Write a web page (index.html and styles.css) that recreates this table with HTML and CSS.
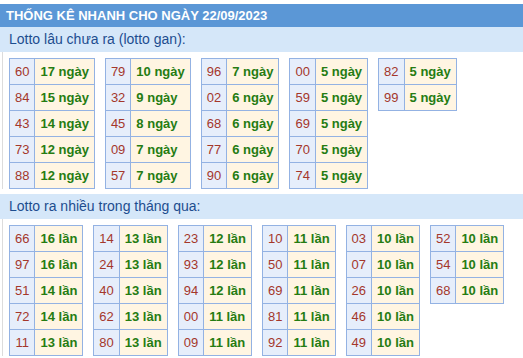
FILE: index.html
```html
<!DOCTYPE html>
<html lang="vi">
<head>
<meta charset="utf-8">
<title>Thống kê nhanh</title>
<link rel="stylesheet" href="styles.css">
</head>
<body>
<div class="page">
  <div class="title">THỐNG KÊ NHANH CHO NGÀY 22/09/2023</div>
  <div class="band">Lotto lâu chưa ra (lotto gan):</div>
  <div class="box">
    <table class="lt"><tr><td class="n">60</td><td class="v">17 ngày</td></tr><tr><td class="n">84</td><td class="v">15 ngày</td></tr><tr><td class="n">43</td><td class="v">14 ngày</td></tr><tr><td class="n">73</td><td class="v">12 ngày</td></tr><tr><td class="n">88</td><td class="v">12 ngày</td></tr></table>
    <table class="lt"><tr><td class="n">79</td><td class="v">10 ngày</td></tr><tr><td class="n">32</td><td class="v">9 ngày</td></tr><tr><td class="n">45</td><td class="v">8 ngày</td></tr><tr><td class="n">09</td><td class="v">7 ngày</td></tr><tr><td class="n">57</td><td class="v">7 ngày</td></tr></table>
    <table class="lt"><tr><td class="n">96</td><td class="v">7 ngày</td></tr><tr><td class="n">02</td><td class="v">6 ngày</td></tr><tr><td class="n">68</td><td class="v">6 ngày</td></tr><tr><td class="n">77</td><td class="v">6 ngày</td></tr><tr><td class="n">90</td><td class="v">6 ngày</td></tr></table>
    <table class="lt"><tr><td class="n">00</td><td class="v">5 ngày</td></tr><tr><td class="n">59</td><td class="v">5 ngày</td></tr><tr><td class="n">69</td><td class="v">5 ngày</td></tr><tr><td class="n">70</td><td class="v">5 ngày</td></tr><tr><td class="n">74</td><td class="v">5 ngày</td></tr></table>
    <table class="lt"><tr><td class="n">82</td><td class="v">5 ngày</td></tr><tr><td class="n">99</td><td class="v">5 ngày</td></tr></table>
  </div>
  <div class="band band2">Lotto ra nhiều trong tháng qua:</div>
  <div class="box">
    <table class="lt"><tr><td class="n">66</td><td class="v">16 lần</td></tr><tr><td class="n">97</td><td class="v">16 lần</td></tr><tr><td class="n">51</td><td class="v">14 lần</td></tr><tr><td class="n">72</td><td class="v">14 lần</td></tr><tr><td class="n">11</td><td class="v">13 lần</td></tr></table>
    <table class="lt"><tr><td class="n">14</td><td class="v">13 lần</td></tr><tr><td class="n">24</td><td class="v">13 lần</td></tr><tr><td class="n">40</td><td class="v">13 lần</td></tr><tr><td class="n">62</td><td class="v">13 lần</td></tr><tr><td class="n">80</td><td class="v">13 lần</td></tr></table>
    <table class="lt"><tr><td class="n">23</td><td class="v">12 lần</td></tr><tr><td class="n">93</td><td class="v">12 lần</td></tr><tr><td class="n">94</td><td class="v">12 lần</td></tr><tr><td class="n">00</td><td class="v">11 lần</td></tr><tr><td class="n">09</td><td class="v">11 lần</td></tr></table>
    <table class="lt"><tr><td class="n">10</td><td class="v">11 lần</td></tr><tr><td class="n">50</td><td class="v">11 lần</td></tr><tr><td class="n">69</td><td class="v">11 lần</td></tr><tr><td class="n">81</td><td class="v">11 lần</td></tr><tr><td class="n">92</td><td class="v">11 lần</td></tr></table>
    <table class="lt"><tr><td class="n">03</td><td class="v">10 lần</td></tr><tr><td class="n">07</td><td class="v">10 lần</td></tr><tr><td class="n">26</td><td class="v">10 lần</td></tr><tr><td class="n">46</td><td class="v">10 lần</td></tr><tr><td class="n">49</td><td class="v">10 lần</td></tr></table>
    <table class="lt"><tr><td class="n">52</td><td class="v">10 lần</td></tr><tr><td class="n">54</td><td class="v">10 lần</td></tr><tr><td class="n">68</td><td class="v">10 lần</td></tr></table>
  </div>
</div>
</body>
</html>
```
FILE: styles.css
```css
html, body {
  margin: 0;
  padding: 0;
  background: #ffffff;
}
body {
  font-family: "Liberation Sans", Arial, sans-serif;
}
.page {
  padding-top: 4px;
}
.title {
  height: 23px;
  line-height: 23px;
  background: #5b97d6;
  color: #ffffff;
  font-size: 13px;
  font-weight: bold;
  padding-left: 6px;
  white-space: nowrap;
}
.band {
  height: 25px;
  line-height: 25px;
  background: #d5e7f9;
  color: #1d4d8f;
  font-size: 14px;
  padding-left: 9px;
}
.band2 {
  margin-top: 5px;
}
.box {
  display: flex;
  align-items: flex-start;
  gap: 10px;
  margin-left: 2px;
  border-left: 1px solid #dcdcdc;
  padding: 6px 0 0 6px;
}
.lt {
  border-collapse: separate;
  border-spacing: 0;
  border-top: 1px solid #93b2e3;
  border-left: 1px solid #93b2e3;
  font-size: 13px;
}
.lt td {
  height: 25px;
  padding: 0 5px;
  border-right: 1px solid #93b2e3;
  border-bottom: 1px solid #93b2e3;
  white-space: nowrap;
  vertical-align: middle;
}
.lt .n {
  background: #e6eefb;
  color: #a4372b;
  text-align: center;
}
.lt .v {
  background: #fff5e2;
  color: #257c12;
  font-weight: bold;
}
```
